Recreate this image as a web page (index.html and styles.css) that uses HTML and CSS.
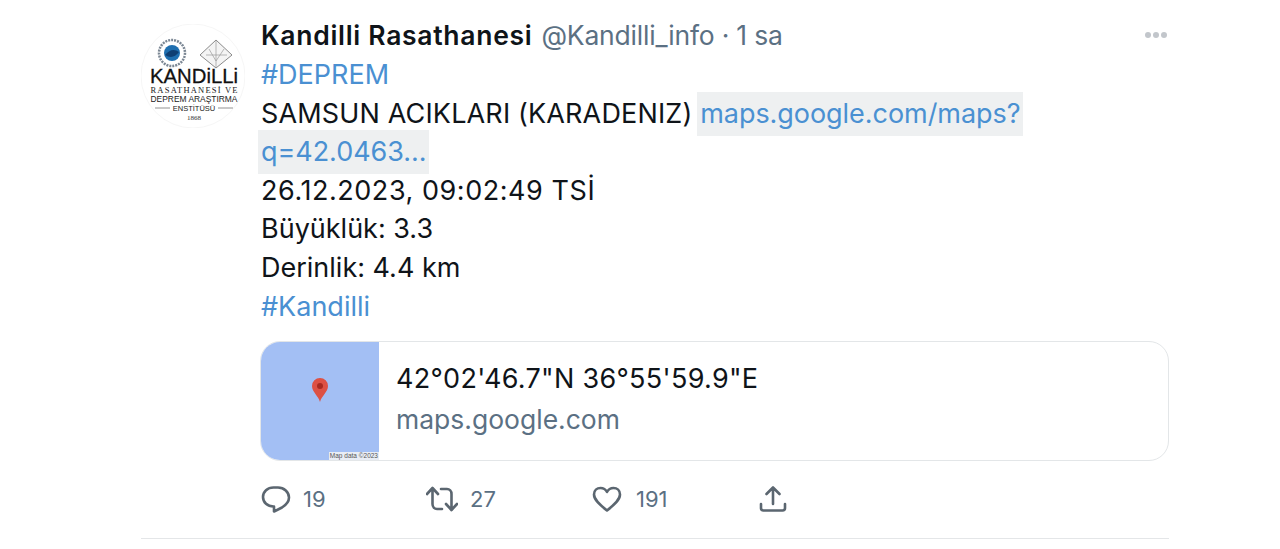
FILE: index.html
```html
<!DOCTYPE html>
<html lang="tr">
<head>
    <meta charset="UTF-8">
    <meta name="viewport" content="width=device-width, initial-scale=1.0">
    <title>Kandilli Rasathanesi</title>
    <link rel="stylesheet" href="styles.css">
</head>
<body>
    <article class="tweet">
        <div class="avatar">
            <svg viewBox="0 0 104 104" width="104" height="104">
                <circle cx="52" cy="52" r="52" fill="#fff" stroke="#f6f6f6"/>
                <circle cx="31" cy="29" r="13" fill="#fff" stroke="#7b8794" stroke-width="2.5" stroke-dasharray="2 1"/>
                <circle cx="31" cy="29" r="8" fill="#1f6fb0"/>
                <path d="M24 31 q7 -8 14 -3 q-6 8 -14 3z" fill="#0f3f73"/>
                <path d="M59 31 L75 16 L91 31 L75 44z" fill="#f4f4f4" stroke="#8a8a8a" stroke-width="1"/>
                <path d="M65 31 L86 31 M75 16 L75 44 M68 25 L75 37 M83 25 L75 37" fill="none" stroke="#999" stroke-width=".7"/>
                <text x="53" y="59" class="logo-main" text-anchor="middle" textLength="88" lengthAdjust="spacingAndGlyphs">KANDiLLi</text>
                <text x="53" y="69" class="logo-sub" text-anchor="middle" textLength="87" lengthAdjust="spacing">RASATHANESİ VE</text>
                <text x="53" y="78" class="logo-dep" text-anchor="middle" textLength="87" lengthAdjust="spacingAndGlyphs">DEPREM ARAŞTIRMA</text>
                <path d="M14 84 H29 M77 84 H92" stroke="#777" stroke-width=".8"/>
                <text x="53" y="87" class="logo-small" text-anchor="middle">ENSTİTÜSÜ</text>
                <text x="53" y="96" class="logo-year" text-anchor="middle">1868</text>
            </svg>
        </div>
        <div class="tweet-body">
            <div class="tweet-head">
                <span class="name">Kandilli Rasathanesi</span>
                <span class="handle">@Kandilli_info · 1 sa</span>
                <span class="more"><i></i><i></i><i></i></span>
            </div>
            <div class="tweet-text">
                <div><a class="tag">#DEPREM</a></div>
                <div class="line-place">SAMSUN ACIKLARI (KARADENIZ) <a class="link">maps.google.com/maps?</a></div>
                <div><a class="link link-second">q=42.0463...</a></div>
                <div class="line-date">26.12.2023, 09:02:49 TSİ</div>
                <div>Büyüklük: 3.3</div>
                <div>Derinlik: 4.4 km</div>
                <div><a class="tag">#Kandilli</a></div>
            </div>
            <div class="card">
                <div class="card-map">
                    <svg class="pin" viewBox="0 0 16 24" width="16" height="24">
                        <path d="M8 24 C6.5 18 0 14 0 8 A8 8 0 0 1 16 8 C16 14 9.5 18 8 24z" fill="#dd5144"/>
                        <circle cx="8" cy="8" r="3" fill="#a82a20"/>
                    </svg>
                    <span class="map-data">Map data ©2023</span>
                </div>
                <div class="card-info">
                    <div class="card-title">42°02'46.7"N 36°55'59.9"E</div>
                    <div class="card-site">maps.google.com</div>
                </div>
            </div>
            <div class="actions">
                <div class="action action-reply">
                    <svg viewBox="0 0 30 30" width="30" height="30"><path d="M12.5 3.5 H17 C23 3.5 28 8 28 13.5 C28 18 25 21 21 23.5 L13 27.5 V22.5 H12.5 C6.5 22.5 2 18.5 2 13 C2 7.5 6.5 3.5 12.5 3.5z" class="icon-line"/></svg>
                    <span>19</span>
                </div>
                <div class="action action-retweet">
                    <svg viewBox="0 0 32 30" width="32" height="30"><path d="M1 10 L6.5 4 L12 10 M6.5 4.5 V20 C6.5 23 8.5 25 11 25 H16 M15 5 H21 C23.5 5 25.5 7 25.5 10 V25.5 M20 20 L25.5 26 L31 20" class="icon-line"/></svg>
                    <span>27</span>
                </div>
                <div class="action action-like">
                    <svg viewBox="0 0 30 30" width="30" height="30"><path d="M15 26.5 C8 21 2 16 2 10.5 C2 6.5 5 4 8.5 4 C11.3 4 13.7 5.5 15 8 C16.3 5.5 18.7 4 21.5 4 C25 4 28 6.5 28 10.5 C28 16 22 21 15 26.5z" class="icon-line"/></svg>
                    <span>191</span>
                </div>
                <div class="action action-share">
                    <svg viewBox="0 0 30 30" width="30" height="30"><path d="M15 20 V3.5 M8.5 10 L15 3.5 L21.5 10 M3 20 V24 C3 25.5 4 26.5 5.5 26.5 H24.5 C26 26.5 27 25.5 27 24 V20" class="icon-line"/></svg>
                </div>
            </div>
        </div>
    </article>
</body>
</html>
```
FILE: styles.css
```css
body {
    margin: 0;
    background-color: #fff;
    color: #0f1419;
    font-family: Inter, "Liberation Sans", Arial, sans-serif;
}
.tweet {
    display: flex;
    gap: 16px;
    box-sizing: border-box;
    width: 1028px;
    height: 539px;
    margin-left: 141px;
    padding-top: 24px;
    border-bottom: 1px solid #e4e6e8;
}
.avatar {
    flex: none;
    width: 104px;
    height: 104px;
}
.logo-main {
    font: 21px "Liberation Sans", sans-serif;
    fill: #111;
    stroke: #111;
    stroke-width: .3;
}
.logo-sub {
    font: 8.5px "Liberation Serif", serif;
    fill: #222;
}
.logo-dep {
    font: 8.5px "Liberation Sans", sans-serif;
    fill: #222;
}
.logo-small {
    font: 7.5px "Liberation Sans", sans-serif;
    fill: #222;
}
.logo-year {
    font: 7px "Liberation Serif", serif;
    fill: #333;
}
.tweet-body {
    flex: 1;
    min-width: 0;
}
.tweet-head {
    display: flex;
    align-items: baseline;
    gap: 9px;
    height: 32px;
    font-size: 26.5px;
    line-height: 22px;
}
.name {
    font-weight: 600;
    letter-spacing: .7px;
}
.handle {
    color: #5b7083;
    letter-spacing: -.2px;
}
.more {
    display: flex;
    gap: 2px;
    margin-left: auto;
    align-self: flex-start;
    margin-top: 8px;
    margin-right: 2px;
}
.more i {
    width: 6px;
    height: 6px;
    border-radius: 50%;
    background-color: #c2c6cb;
}
.tweet-text {
    font-size: 27px;
    line-height: 38.6px;
}
.line-place {
    letter-spacing: .15px;
}
.line-date {
    letter-spacing: .55px;
}
.tag, .link {
    color: #4a90d2;
}
.link {
    background-color: #eef0f1;
    padding: 5px 3px 6px;
    margin-left: -3px;
    letter-spacing: -.05px;
}
.card {
    display: flex;
    box-sizing: border-box;
    height: 120px;
    margin-top: 15px;
    margin-left: -1px;
    border: 1px solid #e3e6e8;
    border-radius: 20px;
    overflow: hidden;
}
.card-map {
    position: relative;
    flex: none;
    display: flex;
    justify-content: center;
    width: 118px;
    background-color: #a3bff4;
}
.pin {
    margin-top: 36px;
}
.map-data {
    position: absolute;
    right: 0;
    bottom: 0;
    padding: 0 1px;
    background-color: #e9edf5;
    color: #555;
    font-family: "Liberation Sans", sans-serif;
    font-size: 6.5px;
    line-height: 8px;
    white-space: nowrap;
}
.card-info {
    padding: 18px 17px;
}
.card-title {
    font-size: 27px;
    letter-spacing: .3px;
    line-height: 38px;
}
.card-site {
    margin-top: 1px;
    font-size: 26.5px;
    line-height: 40px;
    color: #5b7083;
}
.actions {
    display: flex;
    margin-top: 22px;
}
.action {
    display: flex;
    align-items: center;
    gap: 12px;
    height: 32px;
    color: #5b7083;
    font-size: 22px;
}
.action-reply { width: 165px; }
.action-retweet { width: 166px; }
.action-like {
    width: 166px;
    gap: 14px;
}
.icon-line {
    fill: none;
    stroke: #5b6670;
    stroke-width: 2.6;
    stroke-linecap: round;
    stroke-linejoin: round;
}
```
